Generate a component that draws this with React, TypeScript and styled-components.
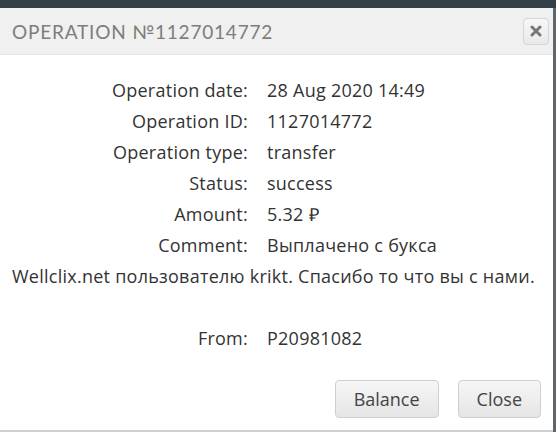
import React from "react";
import styled, { createGlobalStyle } from "styled-components";

const Global = createGlobalStyle`
  html, body { margin: 0; padding: 0; }
  body {
    background: #323f46;
    width: 556px;
    height: 432px;
    overflow: hidden;
    font-family: "Open Sans", "Liberation Sans", sans-serif;
  }
`;

const Page = styled.div`
  display: flex;
  flex-direction: column;
  height: 432px;
  padding-top: 8px;
  box-sizing: border-box;
`;

const Frame = styled.div`
  flex: 1;
  display: flex;
  background: linear-gradient(to right, #9a9fa2, #5c666b);
`;

const Dialog = styled.div`
  width: 553px;
  display: flex;
  flex-direction: column;
  background: #fff;
  border-bottom: 2px solid #cfd0d1;
`;

const Header = styled.div`
  height: 47px;
  display: flex;
  align-items: center;
  justify-content: space-between;
  padding: 0 4px 0 12px;
  background: #f0f0f0;
  border-bottom: 1px solid #e6e6e6;
  box-sizing: border-box;
`;

const Title = styled.h1`
  margin: 0;
  font-family: "Lato", "Noto Sans", sans-serif;
  font-weight: 400;
  font-size: 19px;
  letter-spacing: 0.8px;
  color: #7d7d7d;
`;

const CloseX = styled.button`
  width: 26px;
  height: 27px;
  padding: 0;
  display: flex;
  align-items: center;
  justify-content: center;
  border: 1px solid #d6d6d6;
  border-radius: 4px;
  background: linear-gradient(#f7f7f7, #e9e9e9);
`;

const Body = styled.div`
  flex: 1;
  padding: 20px 10px 0 12px;
  font-size: 18px;
  line-height: 31px;
  letter-spacing: 0.25px;
  color: #333;
`;

const Row = styled.div`
  min-height: 31px;
`;

const Label = styled.span`
  display: inline-block;
  width: 236px;
  margin-right: 19px;
  text-align: right;
`;

const NoWrap = styled.span`
  white-space: nowrap;
`;

const Footer = styled.div`
  display: flex;
  justify-content: flex-end;
  gap: 19px;
  padding: 0 12px 12px 0;
`;

const Button = styled.button`
  height: 38px;
  padding: 0 18px;
  font-family: "Open Sans", "Liberation Sans", sans-serif;
  font-size: 18px;
  color: #444;
  border: 1px solid #cfcfcf;
  border-radius: 4px;
  background: linear-gradient(#f6f6f6, #e5e5e5);
`;

const rows: [string, React.ReactNode][] = [
  ["Operation date:", "28 Aug 2020 14:49"],
  ["Operation ID:", "1127014772"],
  ["Operation type:", "transfer"],
  ["Status:", "success"],
  ["Amount:", "5.32 ₽"],
  [
    "Comment:",
    <>
      Выплачено с букса{" "}
      <NoWrap>Wellclix.net пользователю krikt. Спасибо то что вы с нами.</NoWrap>
    </>,
  ],
];

export default function App() {
  return (
    <>
      <Global />
      <Page>
        <Frame>
          <Dialog>
            <Header>
              <Title>OPERATION №1127014772</Title>
              <CloseX aria-label="close">
                <svg width="12" height="12" viewBox="0 0 12 12">
                  <path d="M2 2 L10 10 M10 2 L2 10" stroke="#777" strokeWidth="3" strokeLinecap="round" />
                </svg>
              </CloseX>
            </Header>
            <Body>
              {rows.map(([l, v]) => (
                <Row key={l}>
                  <Label>{l}</Label>
                  {v}
                </Row>
              ))}
              <Row />
              <Row>
                <Label>From:</Label>
                P20981082
              </Row>
            </Body>
            <Footer>
              <Button>Balance</Button>
              <Button>Close</Button>
            </Footer>
          </Dialog>
        </Frame>
      </Page>
    </>
  );
}
